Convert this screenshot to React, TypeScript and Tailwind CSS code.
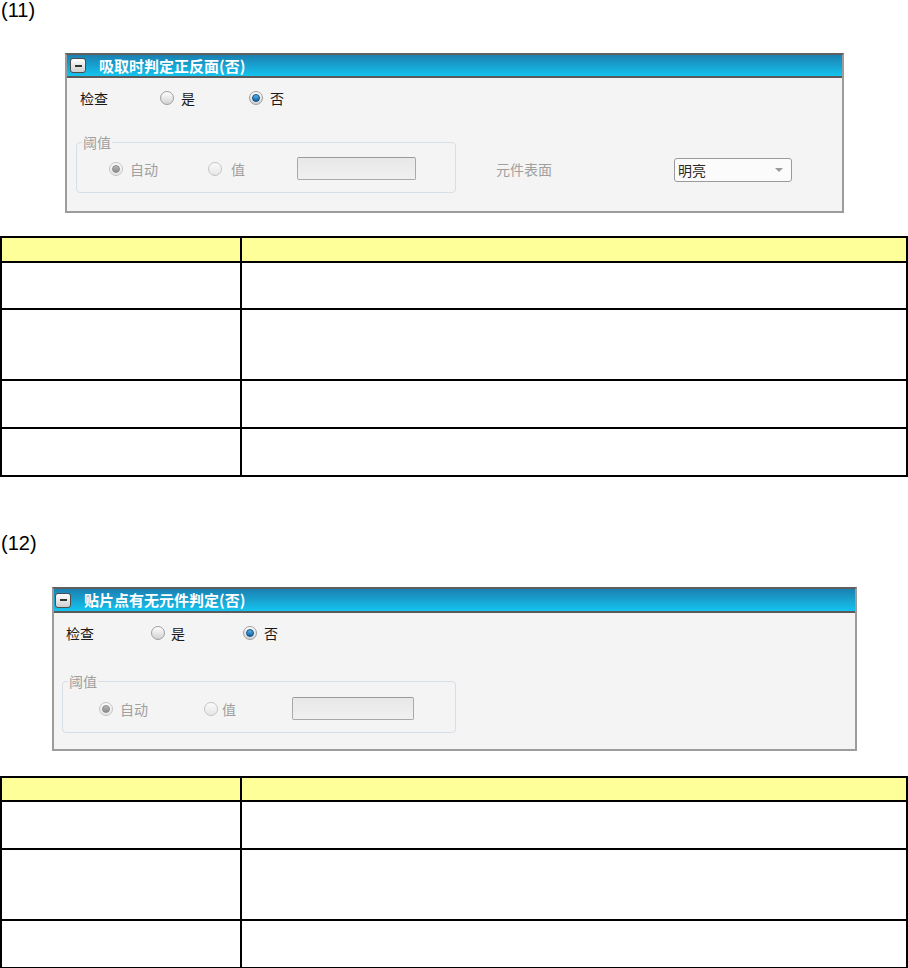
import React from "react";

const CJK = "font-['Noto_Sans_CJK_SC','Noto_Sans',sans-serif]";

function Radio({ checked, disabled }: { checked?: boolean; disabled?: boolean }) {
  const ring = disabled
    ? "border-[#c4c4c4] from-[#fbfbfb] to-[#e6e6e6]"
    : "border-[#9e9e9e] from-[#ffffff] to-[#d2d2d2]";
  return (
    <span
      className={`inline-flex h-[14px] w-[14px] shrink-0 items-center justify-center rounded-full border bg-linear-to-b ${ring}`}
    >
      {checked ? (
        disabled ? (
          <span className="h-[8px] w-[8px] rounded-full border border-[#8a8a8a] bg-linear-to-b from-[#b8b8b8] to-[#8c8c8c]" />
        ) : (
          <span className="h-[8px] w-[8px] rounded-full border border-[#0c4e80] bg-linear-to-b from-[#5cb6ea] to-[#0e62a4]" />
        )
      ) : null}
    </span>
  );
}

function Header({ title, tall }: { title: string; tall?: boolean }) {
  return (
    <div
      className={`flex shrink-0 items-center border-b-2 border-[#5a5a5a] bg-linear-to-b from-[#1a80b1] to-[#13c4ef] ${
        tall ? "h-[24px] pl-[1px]" : "h-[23px] pl-[3px]"
      }`}
    >
      <span className="flex h-[15px] w-[16px] items-center justify-center rounded-[3px] border border-[#4d4d4d] bg-linear-to-b from-[#ffffff] to-[#cfcfcf]">
        <span className="h-[2px] w-[7px] bg-[#333333]" />
      </span>
      <span className={`ml-[13px] text-[15px] font-bold leading-[20px] text-white ${CJK}`}>{title}</span>
    </div>
  );
}

function Group({ children, className }: { children: React.ReactNode; className: string }) {
  return (
    <div className={`relative rounded-[4px] border border-[#d6dee7] ${className}`}>
      <span
        className={`absolute -top-[11px] left-[5px] bg-[#f4f4f4] px-[1px] text-[14px] leading-[20px] text-[#a0a0a0] ${CJK}`}
      >
        阈值
      </span>
      {children}
    </div>
  );
}

function InputBox({ className }: { className: string }) {
  return (
    <div
      className={`h-[23px] rounded-[2px] border border-[#a9a9a9] border-t-[#9a9a9a] bg-linear-to-b from-[#e8e8e8] to-[#f0f0f0] ${className}`}
    />
  );
}

export default function App() {
  return (
    <div className={`w-[908px] bg-white pb-[2px] ${CJK}`}>
      {/* (11) */}
      <div className="h-[53px] pl-[1px] font-['Liberation_Sans',Arial,sans-serif] text-[20px] leading-[21px] text-black">
        (11)
      </div>

      {/* Panel 1 */}
      <div className="ml-[65px] flex h-[160px] w-[779px] flex-col border-2 border-[#9c9c9c] border-t-[#5e5e5e] bg-[#f4f4f4]">
        <Header title="吸取时判定正反面(否)" />
        <div className="flex h-[40px] items-center pl-[13px] text-[14px] leading-[20px] text-[#1a1a1a]">
          <span className="w-[80px]">检查</span>
          <span className="flex w-[89px] items-center">
            <Radio />
            <span className="ml-[7px]">是</span>
          </span>
          <span className="flex items-center">
            <Radio checked />
            <span className="ml-[7px]">否</span>
          </span>
        </div>
        <div className="mt-[24px] flex items-start">
          <Group className="ml-[9px] h-[51px] w-[380px]">
            <div className="flex items-center pl-[32px] pt-[14px] text-[14px] leading-[20px] text-[#a0a0a0]">
              <span className="flex w-[99px] items-center">
                <Radio checked disabled />
                <span className="ml-[7px]">自动</span>
              </span>
              <span className="flex w-[89px] items-center">
                <Radio disabled />
                <span className="ml-[9px]">值</span>
              </span>
              <InputBox className="w-[119px]" />
            </div>
          </Group>
          <span className="ml-[40px] mt-[17px] w-[178px] shrink-0 whitespace-nowrap text-[14px] leading-[20px] text-[#a0a0a0]">
            元件表面
          </span>
          <div className="mt-[16px] flex h-[24px] w-[118px] shrink-0 items-center justify-between rounded-[3px] border border-[#9a9a9a] bg-[#fbfbfb] pl-[3px] pr-[8px]">
            <span className="text-[14px] leading-[20px] text-[#2a2a2a]">明亮</span>
            <span className="h-0 w-0 border-x-[4px] border-t-[4px] border-x-transparent border-t-[#9a9a9a]" />
          </div>
        </div>
      </div>

      {/* Table 1 */}
      <div className="mt-[23px] w-[908px] border-l-2 border-t-2 border-black">
        <div className="flex h-[25px]">
          <div className="w-[240px] border-b-2 border-r-2 border-black bg-[#ffff99]" />
          <div className="flex-1 border-b-2 border-r-2 border-black bg-[#ffff99]" />
        </div>
        <div className="flex h-[47px]">
          <div className="w-[240px] border-b-2 border-r-2 border-black" />
          <div className="flex-1 border-b-2 border-r-2 border-black" />
        </div>
        <div className="flex h-[71px]">
          <div className="w-[240px] border-b-2 border-r-2 border-black" />
          <div className="flex-1 border-b-2 border-r-2 border-black" />
        </div>
        <div className="flex h-[48px]">
          <div className="w-[240px] border-b-2 border-r-2 border-black" />
          <div className="flex-1 border-b-2 border-r-2 border-black" />
        </div>
        <div className="flex h-[48px]">
          <div className="w-[240px] border-b-2 border-r-2 border-black" />
          <div className="flex-1 border-b-2 border-r-2 border-black" />
        </div>
      </div>

      {/* (12) */}
      <div className="mt-[56px] h-[54px] pl-[1px] font-['Liberation_Sans',Arial,sans-serif] text-[20px] leading-[21px] text-black">
        (12)
      </div>

      {/* Panel 2 */}
      <div className="ml-[52px] flex h-[164px] w-[805px] flex-col border-2 border-[#9c9c9c] border-t-[#5e5e5e] bg-[#f4f4f4]">
        <Header title="贴片点有无元件判定(否)" tall />
        <div className="flex h-[40px] items-center pl-[12px] text-[14px] leading-[20px] text-[#1a1a1a]">
          <span className="w-[85px]">检查</span>
          <span className="flex w-[92px] items-center">
            <Radio />
            <span className="ml-[6px]">是</span>
          </span>
          <span className="flex items-center">
            <Radio checked />
            <span className="ml-[7px]">否</span>
          </span>
        </div>
        <div className="mt-[28px] flex items-start">
          <Group className="ml-[8px] h-[52px] w-[394px]">
            <div className="flex items-center pl-[36px] pt-[15px] text-[14px] leading-[20px] text-[#a0a0a0]">
              <span className="flex w-[105px] items-center">
                <Radio checked disabled />
                <span className="ml-[7px]">自动</span>
              </span>
              <span className="flex w-[88px] items-center">
                <Radio disabled />
                <span className="ml-[4px]">值</span>
              </span>
              <InputBox className="w-[122px]" />
            </div>
          </Group>
        </div>
      </div>

      {/* Table 2 */}
      <div className="mt-[25px] w-[908px] border-l-2 border-t-2 border-black">
        <div className="flex h-[24px]">
          <div className="w-[240px] border-b-2 border-r-2 border-black bg-[#ffff99]" />
          <div className="flex-1 border-b-2 border-r-2 border-black bg-[#ffff99]" />
        </div>
        <div className="flex h-[48px]">
          <div className="w-[240px] border-b-2 border-r-2 border-black" />
          <div className="flex-1 border-b-2 border-r-2 border-black" />
        </div>
        <div className="flex h-[71px]">
          <div className="w-[240px] border-b-2 border-r-2 border-black" />
          <div className="flex-1 border-b-2 border-r-2 border-black" />
        </div>
        <div className="flex h-[48px]">
          <div className="w-[240px] border-b-2 border-r-2 border-black" />
          <div className="flex-1 border-b-2 border-r-2 border-black" />
        </div>
      </div>
    </div>
  );
}
